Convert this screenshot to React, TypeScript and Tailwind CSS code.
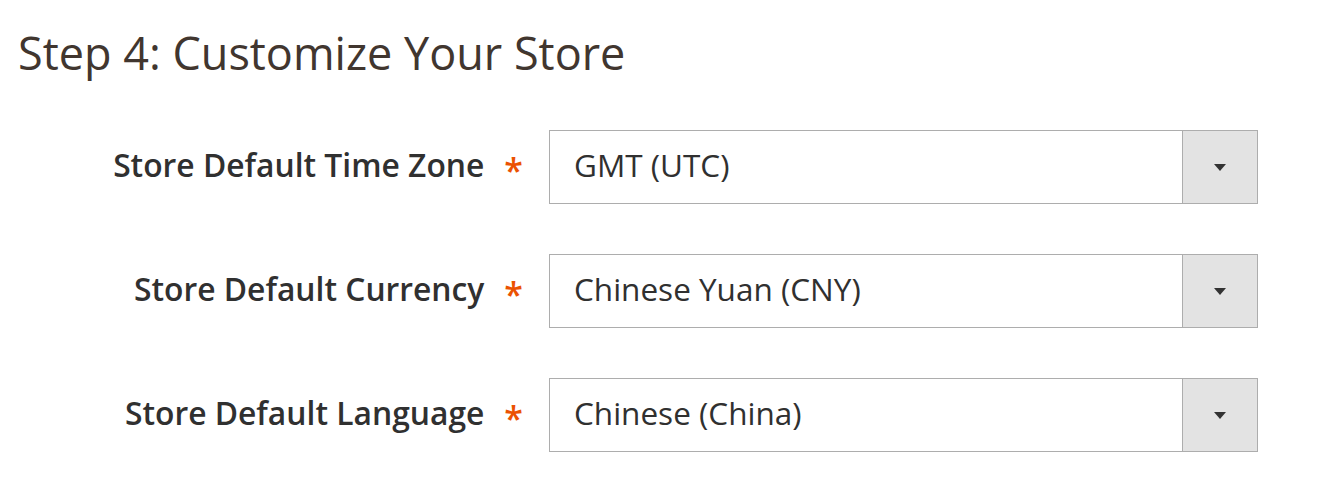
import React from "react";

const rows = [
  { label: "Store Default Time Zone", value: "GMT (UTC)" },
  { label: "Store Default Currency", value: "Chinese Yuan (CNY)" },
  { label: "Store Default Language", value: "Chinese (China)" },
];

const App = () => (
  <div className="min-h-[500px] bg-white font-['Open_Sans',sans-serif] text-[#303030]">
    <h1 className="pl-[18px] pt-[25px] text-[45px] leading-[56px] text-[#41362f]">
      Step 4: Customize Your Store
    </h1>
    <div className="mt-[49px] flex flex-col gap-[50px]">
      {rows.map((row) => (
        <div key={row.label} className="flex items-center">
          <div className="flex w-[549px] items-center justify-end pb-[5px] pr-[26px]">
            <span className="text-[31.8px] font-semibold">{row.label}</span>
            <span className="ml-[20px] mt-[10px] text-[34px] font-semibold leading-none text-[#eb5202]">*</span>
          </div>
          <div className="flex h-[74px] w-[709px] border border-[#adadad] bg-white">
            <div className="flex flex-1 items-center pb-[5px] pl-[24px] text-[31.5px]">{row.value}</div>
            <div className="flex w-[75px] items-center justify-center border-l border-[#adadad] bg-[#e3e3e3]">
              <svg width="12" height="7" viewBox="0 0 12 7">
                <path d="M0 0h12L6 7z" fill="#333" />
              </svg>
            </div>
          </div>
        </div>
      ))}
    </div>
  </div>
);

export default App;
